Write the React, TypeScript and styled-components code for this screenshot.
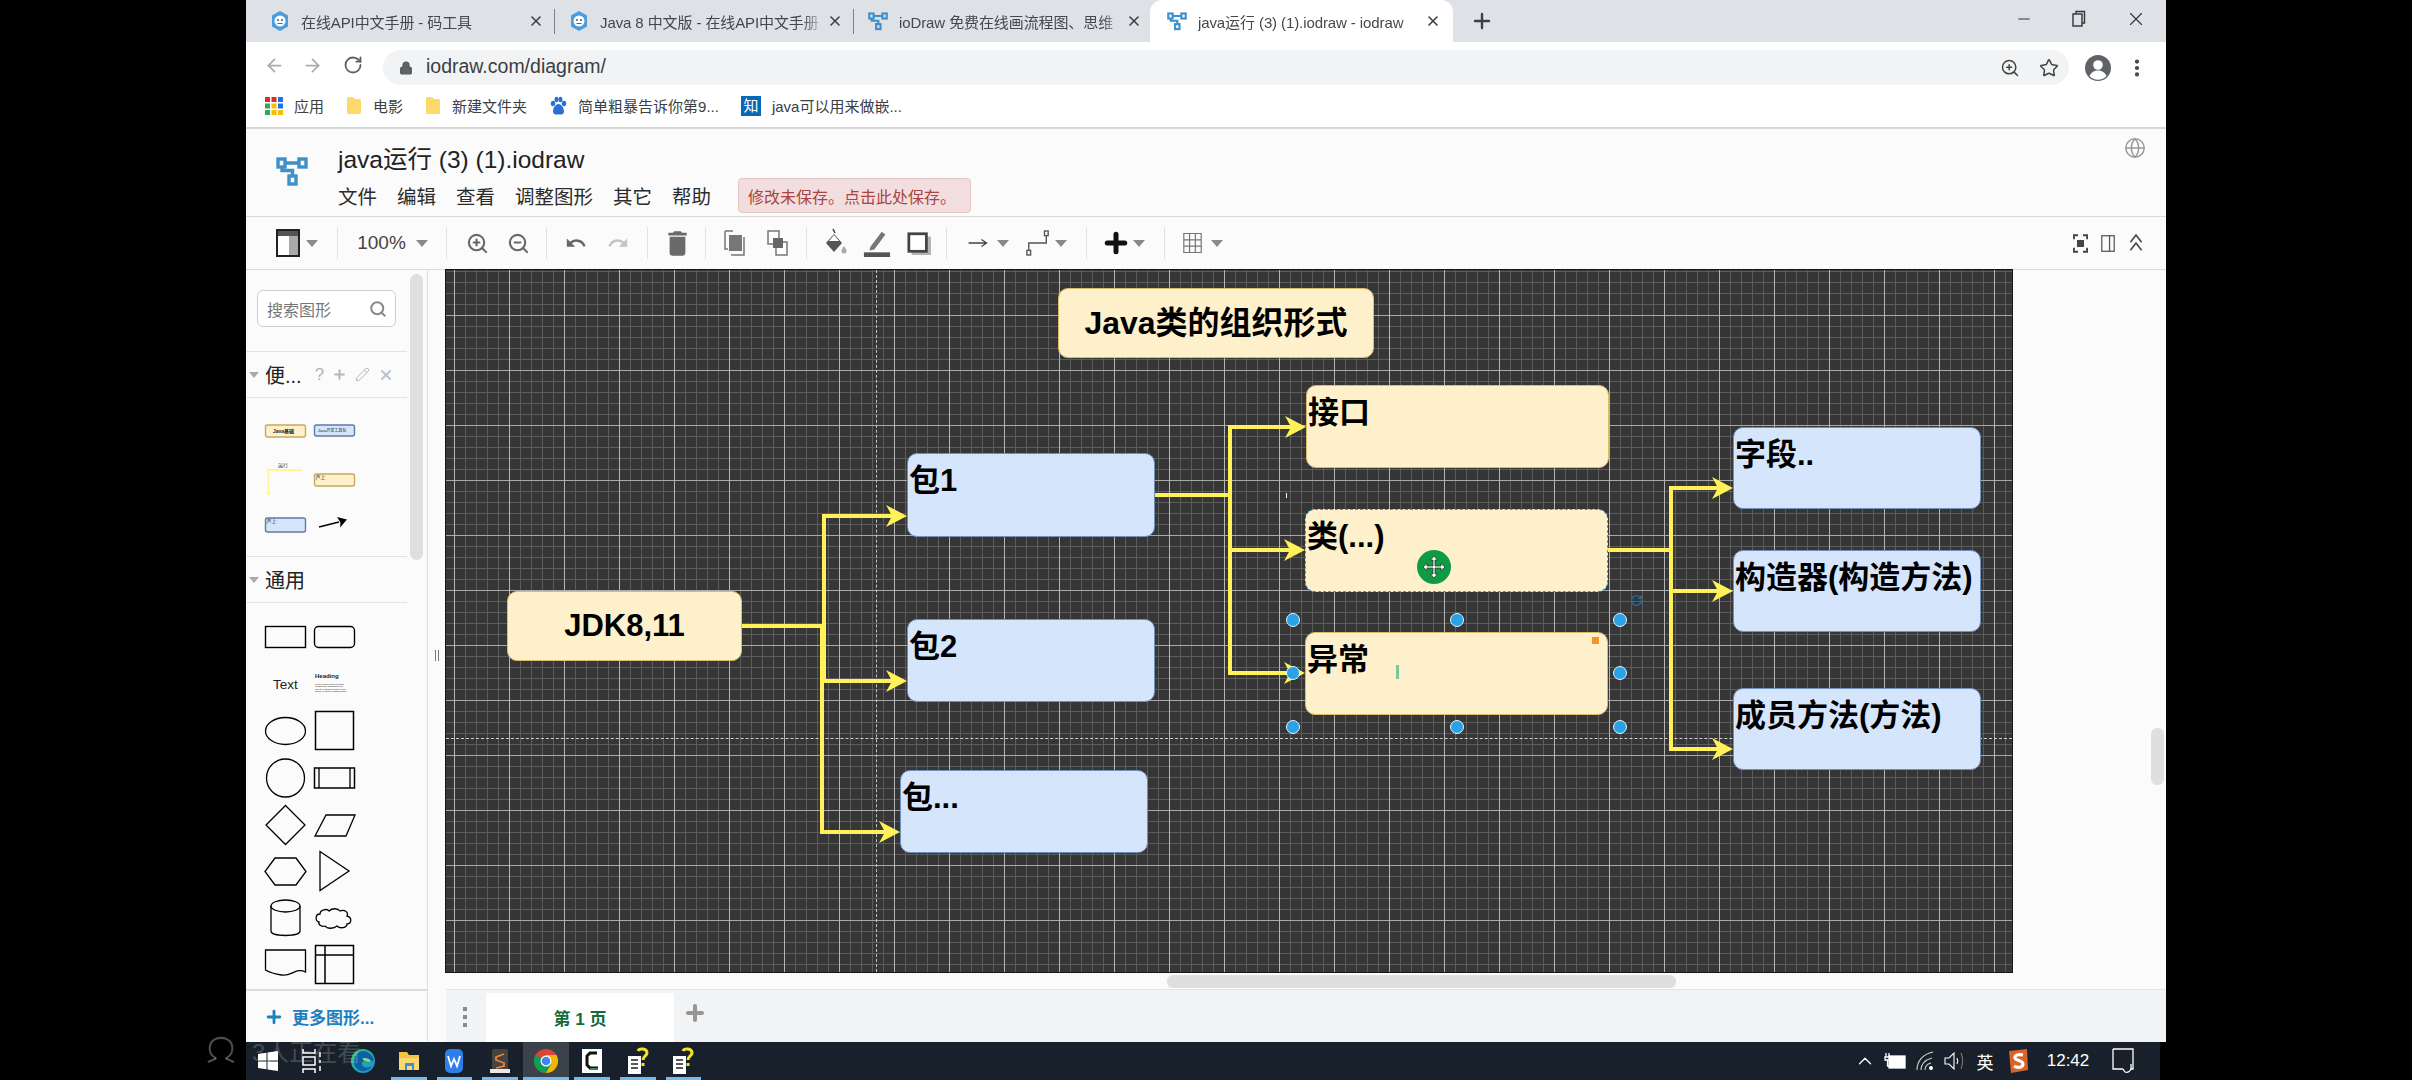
import * as React from 'react';
import styled, { createGlobalStyle } from 'styled-components';
import {
  ArrowLeft,
  ArrowRight,
  ChevronUp,
  Globe,
  Lock,
  Minus,
  MoreVertical,
  Pencil,
  Plus,
  RotateCw,
  Search,
  Star,
  X,
  ZoomIn,
  ZoomOut,
} from 'lucide-react';

const UI_FONT = '"Liberation Sans", "Noto Sans CJK SC", sans-serif';
const CANVAS_X = 445;
const CANVAS_Y = 270;
const LINK = '#fff157';

const GlobalStyle = createGlobalStyle`
  html, body {
    margin: 0;
    padding: 0;
    background: #000;
    font-family: ${UI_FONT};
  }
`;

const Page = styled.div`
  position: relative;
  width: 2412px;
  height: 1080px;
  background: #000;
  display: flex;
  justify-content: center;
  overflow: hidden;
`;

const Screen = styled.div`
  width: 1920px;
  height: 1080px;
  display: flex;
  flex-direction: column;
  background: #fbfbfb;
`;

/* browser chrome */
const TabStrip = styled.div`
  height: 42px;
  flex: none;
  background: #dee1e6;
  display: flex;
  align-items: stretch;
  padding-left: 7px;
`;

const Tab = styled.div<{ $active?: boolean }>`
  position: relative;
  width: ${(p) => (p.$active ? 303 : 299)}px;
  box-sizing: border-box;
  padding-left: 17px;
  display: flex;
  align-items: center;
  background: ${(p) => (p.$active ? '#fff' : 'transparent')};
  border-radius: 12px 12px 0 0;
`;

const TabDivider = styled.span`
  position: absolute;
  right: -3px;
  top: 9px;
  width: 1px;
  height: 25px;
  background: #7d8185;
`;

const TabIcon = styled.span`
  width: 20px;
  height: 20px;
  flex: none;
  display: flex;
  align-items: center;
  justify-content: center;
`;

const TabTitle = styled.span`
  margin-left: 11px;
  width: 225px;
  flex: none;
  overflow: hidden;
  white-space: nowrap;
  font-size: 15px;
  letter-spacing: -0.1px;
  color: #44484d;
  -webkit-mask-image: linear-gradient(90deg, #000 90%, transparent 100%);
  mask-image: linear-gradient(90deg, #000 90%, transparent 100%);
`;

const TabClose = styled.span`
  width: 20px;
  display: flex;
  justify-content: center;
  color: #3c4043;
`;

const NewTab = styled.span`
  margin-left: 17px;
  width: 24px;
  display: flex;
  align-items: center;
  justify-content: center;
  color: #3c4043;
`;

const WindowControls = styled.div`
  margin-left: auto;
  display: flex;
  color: #333;
  padding-bottom: 4px;
`;

const WindowButton = styled.span<{ $w: number }>`
  width: ${(p) => p.$w}px;
  display: flex;
  align-items: center;
  justify-content: center;
`;

const AddressRow = styled.div`
  height: 46px;
  flex: none;
  background: #fff;
  display: flex;
  align-items: center;
  padding: 0 18px 0 9px;
  box-sizing: border-box;
`;

const NavButton = styled.span<{ $w: number; $dim?: boolean }>`
  width: ${(p) => p.$w}px;
  display: flex;
  justify-content: center;
  color: ${(p) => (p.$dim ? '#a8abaf' : '#5f6368')};
`;

const AddressPill = styled.div`
  flex: 1;
  height: 35px;
  margin: 5px 0 0 8px;
  border-radius: 18px;
  background: #f1f3f4;
  display: flex;
  align-items: center;
  padding: 0 10px 0 16px;
  color: #55585c;
`;

const Url = styled.span`
  margin: -2px 0 0 13px;
  font-size: 19.5px;
  color: #3b3e42;
`;

const PillEnd = styled.div`
  margin-left: auto;
  display: flex;
  align-items: center;
  gap: 19px;
  color: #444;
`;

const Avatar = styled.span`
  margin: 5px 0 0 16px;
  width: 26px;
  height: 26px;
  flex: none;
`;

const MenuDots = styled.span`
  margin: 5px 0 0 15px;
  width: 22px;
  display: flex;
  justify-content: center;
  color: #444;
`;

const BookmarkRow = styled.div`
  height: 41px;
  flex: none;
  box-sizing: border-box;
  background: #fff;
  border-bottom: 2px solid #d7d7d7;
  padding: 0 0 4px 19px;
  display: flex;
  align-items: center;
`;

const Bookmark = styled.span<{ $first?: boolean }>`
  margin-left: ${(p) => (p.$first ? 0 : 22)}px;
  display: flex;
  align-items: center;
  gap: 11px;
  font-size: 15px;
  color: #3c4043;
`;

const ZhihuBadge = styled.span`
  width: 20px;
  height: 20px;
  background: #0a68b8;
  color: #fff;
  font-size: 15px;
  line-height: 20px;
  text-align: center;
`;

/* drawing app */
const AppHeader = styled.div`
  height: 88px;
  flex: none;
  box-sizing: border-box;
  border-bottom: 1px solid #dadada;
  display: flex;
  align-items: flex-start;
  padding-right: 20px;
`;

const LogoSlot = styled.div`
  width: 92px;
  height: 83px;
  display: flex;
  align-items: center;
  justify-content: center;
`;

const HeaderText = styled.div`
  display: flex;
  flex-direction: column;
`;

const FileName = styled.div`
  margin-top: 17px;
  font-size: 24.5px;
  line-height: 28px;
  color: #222;
`;

const MenuRow = styled.div`
  margin-top: 4px;
  display: flex;
  align-items: center;
  gap: 20px;
`;

const MenuItem = styled.span`
  font-size: 19.5px;
  color: #2b2b2b;
`;

const SaveNotice = styled.span`
  margin-left: 7px;
  height: 35px;
  width: 233px;
  box-sizing: border-box;
  display: flex;
  align-items: center;
  padding-left: 9px;
  font-size: 16px;
  color: #a94442;
  background: #f2dede;
  border: 1px solid #e5c6c8;
  border-radius: 4px;
`;

const GlobeSlot = styled.span`
  margin: 8px 0 0 auto;
  color: #999;
`;

const Toolbar = styled.div`
  height: 53px;
  flex: none;
  box-sizing: border-box;
  border-bottom: 1px solid #dadada;
  display: flex;
  align-items: center;
  padding-left: 26px;
  color: #666;
`;

const ToolSlot = styled.span<{ $w?: number; $ml?: number }>`
  width: ${(p) => p.$w ?? 30}px;
  margin-left: ${(p) => p.$ml ?? 0}px;
  flex: none;
  display: flex;
  align-items: center;
  justify-content: center;
`;

const ToolSep = styled.span<{ $ml?: number; $mr?: number }>`
  width: 1px;
  height: 32px;
  flex: none;
  margin: 0 ${(p) => p.$mr ?? 14}px 0 ${(p) => p.$ml ?? 14}px;
  background: #e2e2e2;
`;

const Caret = styled.span`
  width: 0;
  height: 0;
  border-left: 6px solid transparent;
  border-right: 6px solid transparent;
  border-top: 7px solid #8a8a8a;
`;

const ZoomValue = styled.span`
  font-size: 19px;
  color: #444;
`;

const ToolbarEnd = styled.div`
  margin-left: auto;
  padding-right: 18px;
  display: flex;
  align-items: center;
  gap: 4px;
  color: #444;
`;

const Workspace = styled.div`
  height: 772px;
  flex: none;
  display: flex;
`;

const SidePanel = styled.div`
  position: relative;
  width: 182px;
  flex: none;
  box-sizing: border-box;
  border-right: 1px solid #dedede;
  display: flex;
  flex-direction: column;
`;

const SideScroll = styled.div`
  flex: 1;
  width: 161px;
  overflow: hidden;
`;

const SideScrollThumb = styled.span`
  position: absolute;
  left: 164px;
  top: 4px;
  width: 13px;
  height: 286px;
  border-radius: 7px;
  background: #dfdfdf;
`;

const SearchBox = styled.div`
  margin: 20px 0 24px 11px;
  width: 139px;
  height: 37px;
  box-sizing: border-box;
  border: 1px solid #cfcfcf;
  border-radius: 6px;
  background: #fff;
  display: flex;
  align-items: center;
  justify-content: space-between;
  padding: 0 8px 0 9px;
  font-size: 16px;
  color: #777;
`;

const SectionHead = styled.div`
  height: 47px;
  box-sizing: border-box;
  border-top: 1px solid #e2e2e2;
  border-bottom: 1px solid #e2e2e2;
  display: flex;
  align-items: center;
  padding-left: 3px;
  font-size: 20px;
  color: #222;
`;

const SectionCaret = styled(Caret)`
  margin-right: 6px;
  border-left-width: 5px;
  border-right-width: 5px;
  border-top: 6px solid #aaa;
`;

const SectionTools = styled.span`
  margin-left: 13px;
  display: flex;
  align-items: center;
  gap: 8px;
  font-size: 17px;
  color: #b5b5b5;
`;

const ShapeGrid = styled.div<{ $pt: number; $pb: number }>`
  display: grid;
  grid-template-columns: 50px 50px;
  grid-auto-rows: 46.8px;
  padding: ${(p) => p.$pt}px 0 ${(p) => p.$pb}px 14px;
`;

const SideFooter = styled.div`
  height: 53px;
  flex: none;
  box-sizing: border-box;
  border-top: 2px solid #dcdcdc;
  padding-left: 18px;
  display: flex;
  align-items: center;
  gap: 8px;
  font-size: 17px;
  font-weight: 700;
  color: #1f80c0;
`;

const Gutter = styled.div`
  width: 18px;
  flex: none;
  display: flex;
  padding: 380px 0 0 7px;
  box-sizing: border-box;
  gap: 2px;
`;

const GutterBar = styled.span`
  width: 1px;
  height: 11px;
  background: #777;
`;

const Stage = styled.div`
  position: relative;
  flex: 1;
  display: flex;
  flex-direction: column;
`;

const ScrollArea = styled.div`
  position: relative;
  height: 719px;
  flex: none;
`;

const Canvas = styled.div`
  position: relative;
  width: 1566px;
  height: 702px;
  box-shadow: 0 0 0 1px #161616;
  overflow: hidden;
  background-color: #363636;
  background-image: linear-gradient(90deg, #b4b4b4 1px, transparent 1px),
    linear-gradient(180deg, #a8a8a8 1px, transparent 1px),
    linear-gradient(90deg, #5c5c5c 1px, transparent 1px),
    linear-gradient(180deg, #5c5c5c 1px, transparent 1px);
  background-size: 55px 55px, 55px 55px, 11px 11px, 11px 11px;
  background-position: 8px 0, 0 45px, 8px 0, 0 1px;
`;

const Wires = styled.svg`
  position: absolute;
  left: 0;
  top: 0;
`;

const GuideH = styled.span`
  position: absolute;
  left: 0;
  right: 0;
  top: ${738 - CANVAS_Y}px;
  border-top: 1px dashed #d0d0d0;
`;

const GuideV = styled.span`
  position: absolute;
  top: 0;
  bottom: 0;
  left: ${875 - CANVAS_X}px;
  border-left: 1px dashed #c4c4c4;
`;

const DiagramNode = styled.div<{
  $x: number;
  $y: number;
  $w: number;
  $h: number;
  $tone: 'yellow' | 'blue';
  $center?: boolean;
  $size?: number;
  $picked?: boolean;
}>`
  position: absolute;
  left: ${(p) => p.$x - CANVAS_X}px;
  top: ${(p) => p.$y - CANVAS_Y}px;
  width: ${(p) => p.$w}px;
  height: ${(p) => p.$h}px;
  box-sizing: border-box;
  border-radius: 10px;
  border: 1.5px ${(p) => (p.$picked ? 'dashed #2aa6dc' : p.$tone === 'yellow' ? 'solid #d8bd68' : 'solid #6f8fbc')};
  background: ${(p) => (p.$tone === 'yellow' ? '#fdf0cb' : '#d5e5fb')};
  color: #000;
  font-family: "Liberation Sans", "Noto Sans CJK SC", sans-serif;
  font-weight: 700;
  font-size: ${(p) => p.$size ?? 31}px;
  line-height: 36px;
  white-space: nowrap;
  padding: ${(p) => (p.$center ? 0 : '9px 0 0 1px')};
  display: flex;
  align-items: ${(p) => (p.$center ? 'center' : 'flex-start')};
  justify-content: ${(p) => (p.$center ? 'center' : 'flex-start')};
`;

const Handle = styled.span<{ $x: number; $y: number }>`
  position: absolute;
  left: ${(p) => p.$x - CANVAS_X - 7}px;
  top: ${(p) => p.$y - CANVAS_Y - 7}px;
  width: 14px;
  height: 14px;
  box-sizing: border-box;
  border-radius: 50%;
  background: #29a3e6;
  border: 1.5px solid #e4f4ff;
`;

const MoveCursor = styled.span`
  position: absolute;
  left: ${1433 - CANVAS_X - 17}px;
  top: ${567 - CANVAS_Y - 17}px;
  width: 34px;
  height: 34px;
  border-radius: 50%;
  background: #0f9b45;
  display: flex;
  align-items: center;
  justify-content: center;
`;

const Speck = styled.span<{ $x: number; $y: number; $w: number; $h: number; $c: string }>`
  position: absolute;
  left: ${(p) => p.$x - CANVAS_X}px;
  top: ${(p) => p.$y - CANVAS_Y}px;
  width: ${(p) => p.$w}px;
  height: ${(p) => p.$h}px;
  background: ${(p) => p.$c};
`;

const RotateMark = styled.span`
  position: absolute;
  left: ${1629 - CANVAS_X}px;
  top: ${594 - CANVAS_Y}px;
  display: flex;
  color: #1f6f9f;
`;

const HScrollThumb = styled.span`
  position: absolute;
  left: ${1166 - CANVAS_X}px;
  top: 705px;
  width: 509px;
  height: 13px;
  border-radius: 6px;
  background: #dfdfdf;
`;

const VScrollThumb = styled.span`
  position: absolute;
  left: ${2150 - CANVAS_X}px;
  top: ${728 - CANVAS_Y}px;
  width: 13px;
  height: 57px;
  border-radius: 6px;
  background: #dfdfdf;
`;

const PageBar = styled.div`
  flex: 1;
  background: #f1f3f4;
  border-top: 1px solid #e4e4e4;
  display: flex;
  align-items: flex-end;
  padding-left: 40px;
`;

const PageMenu = styled.span`
  width: 5px;
  display: flex;
  flex-direction: column;
  gap: 4px;
  margin: 0 19px 15px -24px;
  align-items: center;
`;

const PageMenuDot = styled.span`
  width: 4px;
  height: 4px;
  background: #8a8a8a;
`;

const PageTab = styled.div`
  width: 188px;
  height: 49px;
  background: #fff;
  display: flex;
  align-items: center;
  justify-content: center;
  font-size: 17px;
  font-weight: 700;
  color: #136b3a;
`;

const PageAdd = styled.span`
  margin: 0 0 13px 9px;
  display: flex;
  color: #969696;
  height: 28px;
`;

/* windows taskbar */
const Taskbar = styled.div`
  height: 38px;
  flex: none;
  display: flex;
  align-items: stretch;
  background: #18212b;
  box-shadow: inset -6px 0 0 #000;
`;

const TaskSlot = styled.div<{ $w?: number; $open?: boolean; $active?: boolean }>`
  position: relative;
  width: ${(p) => p.$w ?? 45.8}px;
  flex: none;
  display: flex;
  align-items: center;
  justify-content: center;
  background: ${(p) => (p.$active ? '#3b4249' : 'transparent')};
  &::after {
    content: '';
    display: ${(p) => (p.$open ? 'block' : 'none')};
    position: absolute;
    left: ${(p) => (p.$active ? 0 : 5)}px;
    right: ${(p) => (p.$active ? 0 : 5)}px;
    bottom: 0;
    height: 3px;
    background: #76b9ed;
  }
`;

const Tray = styled.div`
  margin-left: auto;
  width: 316px;
  display: flex;
  align-items: center;
  color: #fff;
`;

const TraySlot = styled.span<{ $w: number }>`
  width: ${(p) => p.$w}px;
  flex: none;
  display: flex;
  align-items: center;
  justify-content: center;
  font-size: 17px;
`;

const Watermark = styled.div`
  position: absolute;
  left: 205px;
  top: 1035px;
  height: 30px;
  display: flex;
  align-items: center;
  gap: 15px;
  font-size: 24px;
  color: rgba(255, 255, 255, 0.2);
`;

/* icons */
const IoLogo = ({ size = 20 }: { size?: number }) => (
  <svg width={size} height={size} viewBox="0 0 32 30" fill="none" stroke="#3f8fca" strokeWidth="3.4">
    <rect x="2" y="3" width="7" height="8" />
    <rect x="23" y="3" width="7" height="8" />
    <rect x="13" y="20" width="7" height="8" />
    <path d="M9 7h14M6 11v3.500h10.500V20" />
  </svg>
);

const MonkeyIcon = () => (
  <svg width="20" height="22" viewBox="0 0 20 22">
    <path d="M10 1l8 4.500v11L10 21l-8-4.500v-11z" fill="#4c9bdc" />
    <circle cx="10" cy="11" r="5.500" fill="#fff" />
    <circle cx="8" cy="10" r="1.100" fill="#2f6fa8" />
    <circle cx="12" cy="10" r="1.100" fill="#2f6fa8" />
    <path d="M7.500 13.500h5" stroke="#2f6fa8" strokeWidth="1" />
  </svg>
);

const RestoreIcon = () => (
  <svg width="16" height="18" viewBox="0 0 16 18" fill="none" stroke="#333" strokeWidth="1.400">
    <rect x="2" y="4" width="9" height="12" />
    <path d="M5 4V1.500h8.500V13H11" />
  </svg>
);

const AvatarIcon = () => (
  <svg width="26" height="26" viewBox="0 0 26 26">
    <circle cx="13" cy="13" r="13" fill="#5f6368" />
    <circle cx="13" cy="10" r="4.800" fill="#fff" />
    <path d="M4.500 21c2-4 5-5.500 8.500-5.500s6.500 1.500 8.500 5.500a11.500 11.500 0 0 1-17 0z" fill="#fff" />
  </svg>
);

const AppsIcon = () => {
  const colors = ['#d93025', '#d93025', '#1a73e8', '#34a853', '#fbbc04', '#1a73e8', '#34a853', '#fbbc04', '#fbbc04'];
  return (
    <svg width="18" height="18" viewBox="0 0 18 18">
      {colors.map((c, i) => (
        <rect key={i} x={(i % 3) * 6.500} y={Math.floor(i / 3) * 6.500} width="5" height="5" fill={c} />
      ))}
    </svg>
  );
};

const FolderMark = () => (
  <svg width="16" height="19" viewBox="0 0 16 19">
    <path d="M1 2.500a1.500 1.500 0 0 1 1.500-1.500H7l2 2h4.500A1.500 1.500 0 0 1 15 4.500v12a1.500 1.500 0 0 1-1.500 1.500h-11A1.500 1.500 0 0 1 1 16.500z" fill="#fdd86a" />
  </svg>
);

const PawIcon = () => (
  <svg width="18" height="20" viewBox="0 0 18 20" fill="#2a6fd6">
    <ellipse cx="4" cy="7.500" rx="2.200" ry="2.800" />
    <ellipse cx="7.500" cy="3.500" rx="2" ry="2.800" />
    <ellipse cx="11.500" cy="3.500" rx="2" ry="2.800" />
    <ellipse cx="15" cy="7.500" rx="2.200" ry="2.800" />
    <path d="M9.500 8c3 0 5.500 4 5.500 7.500 0 3-3.500 3.500-5.500 2.800C7.500 19 4 18.500 4 15.500 4 12 6.500 8 9.500 8z" />
  </svg>
);

const PanelIcon = () => (
  <svg width="24" height="28" viewBox="0 0 24 28">
    <rect x="1" y="1" width="22" height="26" fill="#fff" stroke="#222" strokeWidth="2" />
    <rect x="2" y="2" width="20" height="5" fill="#555" />
    <rect x="13" y="7" width="9" height="19" fill="#aaa" />
  </svg>
);

const TrashIcon = () => (
  <svg width="21" height="27" viewBox="4 2 16 20" fill="#6a6a6a" preserveAspectRatio="none">
    <path d="M6 19c0 1.100.9 2 2 2h8c1.100 0 2-.9 2-2V7H6v12zM19 4h-3.500l-1-1h-5l-1 1H5v2h14V4z" />
  </svg>
);

const UndoIcon = ({ color }: { color: string }) => (
  <svg width="24" height="22" viewBox="0 0 24 24" fill={color}>
    <path d="M12.500 8c-2.650 0-5.050.99-6.900 2.600L2 7v9h9l-3.620-3.620c1.390-1.160 3.160-1.880 5.120-1.880 3.540 0 6.550 2.310 7.600 5.500l2.370-.78C21.080 11.030 17.150 8 12.500 8z" />
  </svg>
);

const RedoIcon = ({ color }: { color: string }) => (
  <svg width="24" height="22" viewBox="0 0 24 24" fill={color}>
    <path d="M18.400 10.600C16.550 8.990 14.150 8 11.500 8c-4.650 0-8.580 3.030-9.960 7.220L3.900 16c1.050-3.190 4.050-5.500 7.600-5.500 1.950 0 3.730.72 5.120 1.880L13 16h9V7l-3.600 3.600z" />
  </svg>
);

const FrontIcon = () => (
  <svg width="24" height="28" viewBox="0 0 24 28">
    <path d="M2 2v18h3M2 2h8" stroke="#777" strokeWidth="1.500" fill="none" />
    <rect x="6" y="6" width="13" height="16" fill="#777" />
    <path d="M21 8v18H8" stroke="#777" strokeWidth="1.500" fill="none" />
  </svg>
);

const BackIcon = () => (
  <svg width="24" height="28" viewBox="0 0 24 28">
    <rect x="3" y="2" width="11" height="13" fill="#fff" stroke="#777" strokeWidth="1.500" />
    <rect x="11" y="13" width="11" height="13" fill="#fff" stroke="#777" strokeWidth="1.500" />
    <rect x="8" y="9" width="10" height="10" fill="#666" />
  </svg>
);

const FillIcon = () => (
  <svg width="24" height="30" viewBox="0 0 24 30">
    <path d="M9 1l2 4" stroke="#444" strokeWidth="1.600" />
    <path d="M10 6l8 9-8 9-8-9z" fill="#555" />
    <path d="M5 13h10l-5-6z" fill="#fff" />
    <path d="M20 18c-1.500 2-2.500 3.500-2.500 5a2.500 2.500 0 0 0 5 0c0-1.500-1-3-2.500-5z" fill="#aaa" />
  </svg>
);

const LineIcon = () => (
  <svg width="28" height="30" viewBox="0 0 30 30">
    <path d="M8 19L20 3l4 3-12 16-5 1z" fill="#777" />
    <rect x="1" y="25" width="28" height="5" fill="#555" />
  </svg>
);

const ShadowIcon = () => (
  <svg width="24" height="24" viewBox="0 0 26 26">
    <rect x="5" y="6" width="21" height="20" fill="#b4b4b4" />
    <rect x="2" y="3" width="19" height="19" fill="#fff" stroke="#444" strokeWidth="3" />
  </svg>
);

const ArrowLinkIcon = () => (
  <svg width="22" height="12" viewBox="0 0 24 14" fill="none" stroke="#444" strokeWidth="1.500">
    <path d="M1 7h20M16 3l6 4-6 4" />
  </svg>
);

const ElbowIcon = () => (
  <svg width="24" height="28" viewBox="0 0 26 28" fill="none" stroke="#555" strokeWidth="1.500">
    <rect x="1" y="22" width="4" height="5" />
    <rect x="20" y="1" width="4" height="5" />
    <path d="M3 22v-8h19V6" />
  </svg>
);

const TableIcon = () => (
  <svg width="19" height="24" viewBox="0 0 24 26" fill="none" stroke="#777" strokeWidth="1.500">
    <path d="M1 1h22v24H1zM1 9h22M1 17h22M8.300 1v24M15.600 1v24" />
  </svg>
);

const FullscreenIcon = () => (
  <svg width="15" height="19" viewBox="0 0 18 22" fill="none" stroke="#444" strokeWidth="2.400">
    <path d="M1 6V1h5M12 1h5v5M17 16v5h-5M6 21H1v-5" />
    <rect x="6" y="8" width="6" height="6" fill="#444" />
  </svg>
);

const SplitIcon = () => (
  <svg width="14" height="19" viewBox="0 0 18 22" fill="none" stroke="#555" strokeWidth="1.600">
    <rect x="1" y="1" width="16" height="20" />
    <path d="M11 1v20" />
  </svg>
);

const CollapseIcon = () => (
  <svg width="16" height="20" viewBox="0 0 20 24" fill="none" stroke="#444" strokeWidth="2">
    <path d="M3 11l7-9 7 9M3 21l7-9 7 9" />
  </svg>
);

const MoveGlyph = () => (
  <svg width="24" height="24" viewBox="0 0 24 24" fill="#fff" stroke="#222" strokeWidth="0.700">
    <path d="M12 1l3.500 4h-2.500v6h6V8.500l4 3.500-4 3.500V13h-6v6h2.500L12 23l-3.500-4H11v-6H5v2.500L1 12l4-3.500V11h6V5H8.500z" />
  </svg>
);

const WindowsLogo = () => (
  <svg width="20" height="20" viewBox="0 0 20 20" fill="#fff">
    <path d="M0 3l8.500-1.300v7.800H0zM9.500 1.500L20 0v9.500H9.500zM0 10.500h8.500v7.800L0 17zM9.500 10.500H20V20L9.500 18.500z" />
  </svg>
);

const TaskViewIcon = () => (
  <svg width="22" height="26" viewBox="0 0 22 26" fill="none" stroke="#fff" strokeWidth="1.500">
    <path d="M2 1v4h12V1M2 25v-4h12v4M2 9h12v8H2zM19 4v5M19 12v3M19 18v5" />
  </svg>
);

const EdgeIcon = () => (
  <svg width="24" height="24" viewBox="0 0 24 24">
    <defs>
      <linearGradient id="edgeA" x1="0" y1="0" x2="1" y2="1">
        <stop offset="0" stopColor="#37c46f" />
        <stop offset="1" stopColor="#1a8fd8" />
      </linearGradient>
    </defs>
    <circle cx="12" cy="12" r="12" fill="url(#edgeA)" />
    <path d="M3 13c0 6 5 10 11 9 3-.5 6-3 7-5-3 2-7 2-9 0-2-2-1-5 2-5 3 0 8 1 9-1C21 5 16 2 12 2 7 2 3 7 3 13z" fill="#0d5fa8" />
    <path d="M13 9c3 0 6 1 7 3 0 1-3 1-6 0s-3-3-1-3z" fill="#7fe08a" />
  </svg>
);

const ExplorerIcon = () => (
  <svg width="24" height="24" viewBox="0 0 24 24">
    <path d="M2 3h8l2 3h10v15H2z" fill="#f5c243" />
    <rect x="2" y="9" width="20" height="12" fill="#fbd870" />
    <rect x="8" y="14" width="9" height="7" fill="#3f8fca" />
    <rect x="10" y="17" width="5" height="4" fill="#fbd870" />
  </svg>
);

const WpsIcon = () => (
  <svg width="24" height="26" viewBox="0 0 24 26">
    <rect x="3" y="1" width="18" height="24" rx="5" fill="#2f7fe8" />
    <path d="M6 8l3 10 3-7 3 7 3-10" fill="none" stroke="#fff" strokeWidth="1.800" />
  </svg>
);

const SublimeIcon = () => (
  <svg width="24" height="26" viewBox="0 0 24 26">
    <rect x="4" y="1" width="16" height="21" rx="2" fill="#45423f" />
    <rect x="2" y="21" width="20" height="4" fill="#e8e8e8" />
    <path d="M16 6l-8 3v3l8 3v3l-8 2" fill="none" stroke="#e9853a" strokeWidth="1.800" />
  </svg>
);

const ChromeIcon = () => (
  <svg width="24" height="24" viewBox="0 0 24 24">
    <circle cx="12" cy="12" r="12" fill="#db4437" />
    <path d="M12 12L1.600 6A12 12 0 0 0 12 24l5.200-9z" fill="#0f9d58" />
    <path d="M12 12l5.200 3L12 24A12 12 0 0 0 22.400 6H12z" fill="#f4b400" />
    <circle cx="12" cy="12" r="5.500" fill="#fff" />
    <circle cx="12" cy="12" r="4.300" fill="#4285f4" />
  </svg>
);

const CodeAppIcon = () => (
  <svg width="24" height="26" viewBox="0 0 24 26">
    <rect x="2" y="1" width="20" height="24" fill="#fff" />
    <path d="M17 5H10L7 8v9l3 3h8" fill="none" stroke="#111" strokeWidth="3" />
    <path d="M10 21h8" stroke="#2d8f4e" strokeWidth="2" />
  </svg>
);

const HelpDocIcon = () => (
  <svg width="24" height="28" viewBox="0 0 24 28">
    <path d="M2 9h13v18H2z" fill="#fff" />
    <path d="M5 13h7M5 17h7M5 21h7" stroke="#222" strokeWidth="1.500" />
    <path d="M12 4c1-3 9-3 9 2 0 3-4 3-4 7M17 16v3" fill="none" stroke="#f4e02a" strokeWidth="3" />
  </svg>
);

const BatteryIcon = () => (
  <svg width="22" height="18" viewBox="0 0 22 18" fill="none" stroke="#fff" strokeWidth="1.300">
    <rect x="5" y="4" width="16" height="12" fill="#fff" />
    <path d="M2 1v4M5 1v4M1 5h5v3H1zM3.500 8v6h2" />
  </svg>
);

const WifiIcon = () => (
  <svg width="18" height="20" viewBox="0 0 18 20" fill="none" stroke="#cfd3d6" strokeWidth="1.100">
    <path d="M1 19C1 10 7 3 17 1M5 19c0-6 4-10 11-12M9 19c0-3 2-6 6-7" />
    <circle cx="15" cy="17" r="2" fill="#fff" stroke="none" />
  </svg>
);

const SpeakerIcon = () => (
  <svg width="22" height="22" viewBox="0 0 22 22" fill="none" stroke="#fff" strokeWidth="1.100">
    <path d="M1 8h4l5-5v16l-5-5H1zM13 8c1 2 1 4 0 6" />
    <path d="M17 3c2 5 2 11 0 16" stroke="#777" />
  </svg>
);

const SogouIcon = () => (
  <svg width="22" height="26" viewBox="0 0 22 26">
    <path d="M2 3l18-2 1 21-17 3z" fill="#d9632a" />
    <path d="M16 7c-4-1-9 0-8 3s8 2 8 6-6 4-9 2" fill="none" stroke="#fff" strokeWidth="3.200" />
  </svg>
);

const NotifyIcon = () => (
  <svg width="22" height="26" viewBox="0 0 22 26" fill="none" stroke="#fff" strokeWidth="1.300">
    <path d="M1 1h20v20h-2M11 21H1V1M11 21l2 3c3 1 6-1 6-4v-4" />
  </svg>
);

const PeopleIcon = () => (
  <svg width="32" height="28" viewBox="0 0 34 30" fill="none" stroke="rgba(255,255,255,.3)" strokeWidth="2.200">
    <path d="M12 24C6 21 4 17 5 11 6 5 11 2 17 2s11 3 12 9c1 6-1 10-7 13" />
    <path d="M3 28c3-2 7-3 9-4M31 28c-3-2-7-3-9-4" />
  </svg>
);

/* sidebar palette thumbnails, all in a 50x46 cell */
const Cell = ({ children }: { children: React.ReactNode }) => (
  <svg width="50" height="46.800" viewBox="0 0 50 46.800" fill="none" stroke="#000" strokeWidth="1.300">
    {children}
  </svg>
);

const TinyText = styled.text<{ $size: number; $bold?: boolean }>`
  font-family: ${UI_FONT};
  font-size: ${(p) => p.$size}px;
  font-weight: ${(p) => (p.$bold ? 700 : 400)};
  fill: #222;
  stroke: none;
`;

const convenienceShapes = [
  <>
    <rect x="5.500" y="17" width="40" height="12" rx="2" fill="#fdf0cb" stroke="#c5aa59" strokeWidth="1.400" />
    <TinyText $size={5} $bold x="13" y="25">Java基础</TinyText>
  </>,
  <>
    <rect x="4.500" y="17" width="40" height="11" rx="2" fill="#d5e5fb" stroke="#5f7ba6" strokeWidth="1.400" />
    <TinyText $size={4} x="8" y="24.500">Java开发工具包</TinyText>
  </>,
  <>
    <path d="M42 15H8.500v24" stroke="#fdf79b" strokeWidth="1.800" />
    <path d="M6 37l2.500 4 2.500-4z" fill="#fdf79b" stroke="none" />
    <TinyText $size={5} x="18" y="12">运行</TinyText>
  </>,
  <>
    <rect x="4.500" y="19" width="40" height="12" rx="2" fill="#fdf0cb" stroke="#c5aa59" strokeWidth="1.400" />
    <TinyText $size={5} x="5.500" y="24">芦上</TinyText>
  </>,
  <>
    <rect x="5.500" y="16" width="40" height="14" rx="2" fill="#d5e5fb" stroke="#5f7ba6" strokeWidth="1.400" />
    <TinyText $size={5} x="6.500" y="21">芦上</TinyText>
  </>,
  <>
    <path d="M9 25l20-5" strokeWidth="1.800" />
    <path d="M27 15l10 2.500-7 8 .5-5z" fill="#000" stroke="none" />
  </>,
];

const generalShapes = [
  <rect x="5.500" y="12.500" width="40" height="21" strokeWidth="1.400" />,
  <rect x="4.500" y="12.500" width="40" height="21" rx="4" strokeWidth="1.400" />,
  <TinyText $size={13.500} x="13" y="28">Text</TinyText>,
  <>
    <TinyText $size={6} $bold x="5" y="17">Heading</TinyText>
    <TinyText $size={2.400} x="5" y="24">Lorem ipsum dolor sit amet,</TinyText>
    <TinyText $size={2.400} x="5" y="26.500">consectetur adipisicing elit,</TinyText>
    <TinyText $size={2.400} x="5" y="29">sed do eiusmod tempor incid</TinyText>
    <TinyText $size={2.400} x="5" y="31.500">labore et dolore magna aliqua</TinyText>
  </>,
  <ellipse cx="25.500" cy="23" rx="20" ry="13.500" />,
  <rect x="5.500" y="3.500" width="38" height="38" strokeWidth="1.500" />,
  <circle cx="25.500" cy="23" r="19" />,
  <>
    <rect x="4.500" y="13" width="40" height="20" strokeWidth="1.500" />
    <path d="M9 13v20M40 13v20" />
  </>,
  <path d="M25.500 3.500L45 23 25.500 42.500 6 23z" />,
  <path d="M16 13h29l-9 21H5z" />,
  <path d="M15 10h21l10 13.500L36 37H15L5 23.500z" />,
  <path d="M10 3.500L39 23 10 42.500z" />,
  <>
    <path d="M11 11v25c0 6 29 6 29 0V11" />
    <ellipse cx="25.500" cy="11" rx="14.500" ry="6" />
  </>,
  <path d="M9 27c-4-1-4-8 1-8 0-4 7-6 9-3 3-3 9-3 11 0 4-2 9 1 7 5 5 1 5 8 0 8 0 4-7 5-10 2-3 3-10 3-12 0-3 1-7-1-6-4z" />,
  <path d="M5.500 8h40v22c-10-5-14 5-24 3-7-1-11-2-16-5z" />,
  <>
    <rect x="5.500" y="3.500" width="38" height="38" strokeWidth="1.500" />
    <path d="M15 3.500v38M5.500 13h38" strokeWidth="1.500" />
  </>,
];

/* diagram content, coordinates are screen pixels */
type NodeData = { label: string; x: number; y: number; w: number; h: number; tone: 'yellow' | 'blue'; center?: boolean; size?: number; picked?: boolean };

const nodes: NodeData[] = [
  { label: 'Java类的组织形式', x: 1057, y: 288, w: 316, h: 70, tone: 'yellow', center: true, size: 32 },
  { label: 'JDK8,11', x: 506, y: 591, w: 235, h: 70, tone: 'yellow', center: true, size: 31 },
  { label: '包1', x: 906, y: 453, w: 248, h: 84, tone: 'blue' },
  { label: '包2', x: 906, y: 619, w: 248, h: 83, tone: 'blue' },
  { label: '包...', x: 899, y: 770, w: 248, h: 83, tone: 'blue' },
  { label: '接口', x: 1305, y: 385, w: 303, h: 83, tone: 'yellow' },
  { label: '类(...)', x: 1304, y: 509, w: 303, h: 83, tone: 'yellow', picked: true },
  { label: '异常', x: 1304, y: 632, w: 303, h: 83, tone: 'yellow' },
  { label: '字段..', x: 1732, y: 427, w: 248, h: 82, tone: 'blue' },
  { label: '构造器(构造方法)', x: 1732, y: 550, w: 248, h: 82, tone: 'blue' },
  { label: '成员方法(方法)', x: 1732, y: 688, w: 248, h: 82, tone: 'blue' },
];

const wirePaths = [
  { d: [[741, 626], [823, 626], [823, 516], [891, 516]], tip: [906, 516] },
  { d: [[823, 626], [823, 681], [891, 681]], tip: [906, 681] },
  { d: [[821, 626], [821, 832], [884, 832]], tip: [899, 832] },
  { d: [[1154, 495], [1229, 495], [1229, 427], [1290, 427]], tip: [1305, 427] },
  { d: [[1229, 495], [1229, 550], [1289, 550]], tip: [1304, 550] },
  { d: [[1229, 550], [1229, 673], [1289, 673]], tip: [1304, 673] },
  { d: [[1607, 550], [1670, 550], [1670, 488], [1717, 488]], tip: [1732, 488] },
  { d: [[1670, 550], [1670, 591], [1717, 591]], tip: [1732, 591] },
  { d: [[1670, 591], [1670, 749], [1717, 749]], tip: [1732, 749] },
];

const handles = [
  [1292, 620], [1456, 620], [1619, 620],
  [1292, 673], [1619, 673],
  [1292, 727], [1456, 727], [1619, 727],
];

const px = (pt: number[]) => `${pt[0] - CANVAS_X},${pt[1] - CANVAS_Y}`;

const arrowHead = (tip: number[]) => {
  const x = tip[0] - CANVAS_X;
  const y = tip[1] - CANVAS_Y;
  return `${x},${y} ${x - 21},${y - 11} ${x - 15},${y} ${x - 21},${y + 11}`;
};

const tabs = [
  { title: '在线API中文手册 - 码工具', icon: <MonkeyIcon /> },
  { title: 'Java 8 中文版 - 在线API中文手册', icon: <MonkeyIcon /> },
  { title: 'ioDraw 免费在线画流程图、思维', icon: <IoLogo /> },
  { title: 'java运行 (3) (1).iodraw - iodraw', icon: <IoLogo />, active: true },
];

const menus = ['文件', '编辑', '查看', '调整图形', '其它', '帮助'];

const taskIcons = [
  <EdgeIcon key="edge" />,
  <ExplorerIcon key="explorer" />,
  <WpsIcon key="wps" />,
  <SublimeIcon key="sublime" />,
  <ChromeIcon key="chrome" />,
  <CodeAppIcon key="code" />,
  <HelpDocIcon key="help1" />,
  <HelpDocIcon key="help2" />,
];

const App: React.FC = () => (
  <Page>
    <GlobalStyle />
    <Screen>
      <TabStrip>
        {tabs.map((tab, i) => (
          <Tab key={tab.title} $active={tab.active}>
            <TabIcon>{tab.icon}</TabIcon>
            <TabTitle>{tab.title}</TabTitle>
            <TabClose><X size={16} strokeWidth={2.4} /></TabClose>
            {i < 2 && <TabDivider />}
          </Tab>
        ))}
        <NewTab><Plus size={24} strokeWidth={2.4} /></NewTab>
        <WindowControls>
          <WindowButton $w={55}><Minus size={18} strokeWidth={1.4} /></WindowButton>
          <WindowButton $w={55}><RestoreIcon /></WindowButton>
          <WindowButton $w={60}><X size={22} strokeWidth={1.2} /></WindowButton>
        </WindowControls>
      </TabStrip>

      <AddressRow>
        <NavButton $w={38} $dim><ArrowLeft size={21} /></NavButton>
        <NavButton $w={38} $dim><ArrowRight size={21} /></NavButton>
        <NavButton $w={44}><RotateCw size={20} strokeWidth={2.2} /></NavButton>
        <AddressPill>
          <Lock size={14} fill="#5f6368" strokeWidth={2.4} />
          <Url>iodraw.com/diagram/</Url>
          <PillEnd>
            <ZoomIn size={20} strokeWidth={1.8} />
            <Star size={20} strokeWidth={1.8} />
          </PillEnd>
        </AddressPill>
        <Avatar><AvatarIcon /></Avatar>
        <MenuDots><MoreVertical size={22} strokeWidth={2.6} /></MenuDots>
      </AddressRow>

      <BookmarkRow>
        <Bookmark $first><AppsIcon />应用</Bookmark>
        <Bookmark><FolderMark />电影</Bookmark>
        <Bookmark><FolderMark />新建文件夹</Bookmark>
        <Bookmark><PawIcon />简单粗暴告诉你第9...</Bookmark>
        <Bookmark><ZhihuBadge>知</ZhihuBadge>java可以用来做嵌...</Bookmark>
      </BookmarkRow>

      <AppHeader>
        <LogoSlot><IoLogo size={32} /></LogoSlot>
        <HeaderText>
          <FileName>java运行 (3) (1).iodraw</FileName>
          <MenuRow>
            {menus.map((m) => <MenuItem key={m}>{m}</MenuItem>)}
            <SaveNotice>修改未保存。点击此处保存。</SaveNotice>
          </MenuRow>
        </HeaderText>
        <GlobeSlot><Globe size={22} strokeWidth={1.6} /></GlobeSlot>
      </AppHeader>

      <Toolbar>
        <ToolSlot $w={32}><PanelIcon /></ToolSlot>
        <ToolSlot $w={16}><Caret /></ToolSlot>
        <ToolSep $ml={17} $mr={20} />
        <ToolSlot $w={47}><ZoomValue>100%</ZoomValue></ToolSlot>
        <ToolSlot $w={16} $ml={9}><Caret /></ToolSlot>
        <ToolSep $ml={16} />
        <ToolSlot $ml={1}><ZoomIn size={23} strokeWidth={2.2} /></ToolSlot>
        <ToolSlot $ml={11}><ZoomOut size={23} strokeWidth={2.2} /></ToolSlot>
        <ToolSep $ml={13} />
        <ToolSlot><UndoIcon color="#666" /></ToolSlot>
        <ToolSlot $ml={12}><RedoIcon color="#c4c4c4" /></ToolSlot>
        <ToolSep />
        <ToolSlot><TrashIcon /></ToolSlot>
        <ToolSep $ml={13} />
        <ToolSlot><FrontIcon /></ToolSlot>
        <ToolSlot $ml={12}><BackIcon /></ToolSlot>
        <ToolSep />
        <ToolSlot><FillIcon /></ToolSlot>
        <ToolSlot $ml={11}><LineIcon /></ToolSlot>
        <ToolSlot $ml={12}><ShadowIcon /></ToolSlot>
        <ToolSep $ml={12} />
        <ToolSlot $ml={2}><ArrowLinkIcon /></ToolSlot>
        <ToolSlot $w={16} $ml={2}><Caret /></ToolSlot>
        <ToolSlot $ml={12}><ElbowIcon /></ToolSlot>
        <ToolSlot $w={16}><Caret /></ToolSlot>
        <ToolSep $ml={17} />
        <ToolSlot><Plus size={30} strokeWidth={4} color="#111" /></ToolSlot>
        <ToolSlot $w={16}><Caret /></ToolSlot>
        <ToolSep $ml={17} $mr={12} />
        <ToolSlot><TableIcon /></ToolSlot>
        <ToolSlot $w={16} $ml={2}><Caret /></ToolSlot>
        <ToolbarEnd>
          <ToolSlot $w={24}><FullscreenIcon /></ToolSlot>
          <ToolSlot $w={24}><SplitIcon /></ToolSlot>
          <ToolSlot $w={24}><CollapseIcon /></ToolSlot>
        </ToolbarEnd>
      </Toolbar>

      <Workspace>
        <SidePanel>
          <SideScroll>
            <SearchBox>搜索图形<Search size={18} strokeWidth={2.6} color="#888" /></SearchBox>
            <SectionHead>
              <SectionCaret />便...
              <SectionTools>
                ?
                <Plus size={15} strokeWidth={3} />
                <Pencil size={15} strokeWidth={1.6} />
                <X size={16} strokeWidth={3} color="#b9c4ce" />
              </SectionTools>
            </SectionHead>
            <ShapeGrid $pt={10} $pb={8}>
              {convenienceShapes.map((s, i) => <Cell key={i}>{s}</Cell>)}
            </ShapeGrid>
            <SectionHead>
              <SectionCaret />通用
            </SectionHead>
            <ShapeGrid $pt={11} $pb={0}>
              {generalShapes.map((s, i) => <Cell key={i}>{s}</Cell>)}
            </ShapeGrid>
          </SideScroll>
          <SideFooter>
            <Plus size={20} strokeWidth={3.4} />更多图形...
          </SideFooter>
          <SideScrollThumb />
        </SidePanel>
        <Gutter>
          <GutterBar />
          <GutterBar />
        </Gutter>
        <Stage>
          <ScrollArea>
            <Canvas>
              <GuideH />
              <GuideV />
              <Wires width="1566" height="702" fill="none" stroke={LINK} strokeWidth="4" strokeLinejoin="miter">
                {wirePaths.map((w, i) => (
                  <React.Fragment key={i}>
                    <polyline points={w.d.map(px).join(' ')} />
                    <polygon points={arrowHead(w.tip)} fill={LINK} stroke="none" />
                  </React.Fragment>
                ))}
              </Wires>
              {nodes.map((n) => (
                <DiagramNode
                  key={n.label}
                  $x={n.x}
                  $y={n.y}
                  $w={n.w}
                  $h={n.h}
                  $tone={n.tone}
                  $center={n.center}
                  $size={n.size}
                  $picked={n.picked}
                >
                  {n.label}
                </DiagramNode>
              ))}
              {handles.map(([x, y]) => <Handle key={`${x}-${y}`} $x={x} $y={y} />)}
              <MoveCursor><MoveGlyph /></MoveCursor>
              <RotateMark><RotateCw size={13} strokeWidth={2.6} /></RotateMark>
              <Speck $x={1591} $y={637} $w={7} $h={7} $c="#f0962c" />
              <Speck $x={1395} $y={665} $w={3} $h={14} $c="#7fc79a" />
              <Speck $x={1285} $y={493} $w={1} $h={5} $c="#fff" />
            </Canvas>
            <HScrollThumb />
          </ScrollArea>
          <VScrollThumb />
          <PageBar>
            <PageMenu>
              <PageMenuDot />
              <PageMenuDot />
              <PageMenuDot />
            </PageMenu>
            <PageTab>第 1 页</PageTab>
            <PageAdd><Plus size={24} strokeWidth={4} /></PageAdd>
          </PageBar>
        </Stage>
      </Workspace>

      <Taskbar>
        <TaskSlot $w={44}><WindowsLogo /></TaskSlot>
        <TaskSlot $w={44}><TaskViewIcon /></TaskSlot>
        <TaskSlot $w={6} />
        {taskIcons.map((icon, i) => (
          <TaskSlot key={i} $open={i > 0} $active={i === 4}>{icon}</TaskSlot>
        ))}
        <Tray>
          <TraySlot $w={30}><ChevronUp size={22} strokeWidth={1.4} /></TraySlot>
          <TraySlot $w={30}><BatteryIcon /></TraySlot>
          <TraySlot $w={30}><WifiIcon /></TraySlot>
          <TraySlot $w={30}><SpeakerIcon /></TraySlot>
          <TraySlot $w={30}>英</TraySlot>
          <TraySlot $w={36}><SogouIcon /></TraySlot>
          <TraySlot $w={64}>12:42</TraySlot>
          <TraySlot $w={46}><NotifyIcon /></TraySlot>
        </Tray>
      </Taskbar>
    </Screen>
    <Watermark>
      <PeopleIcon />
      <span>3人正在看</span>
    </Watermark>
  </Page>
);

export default App;
